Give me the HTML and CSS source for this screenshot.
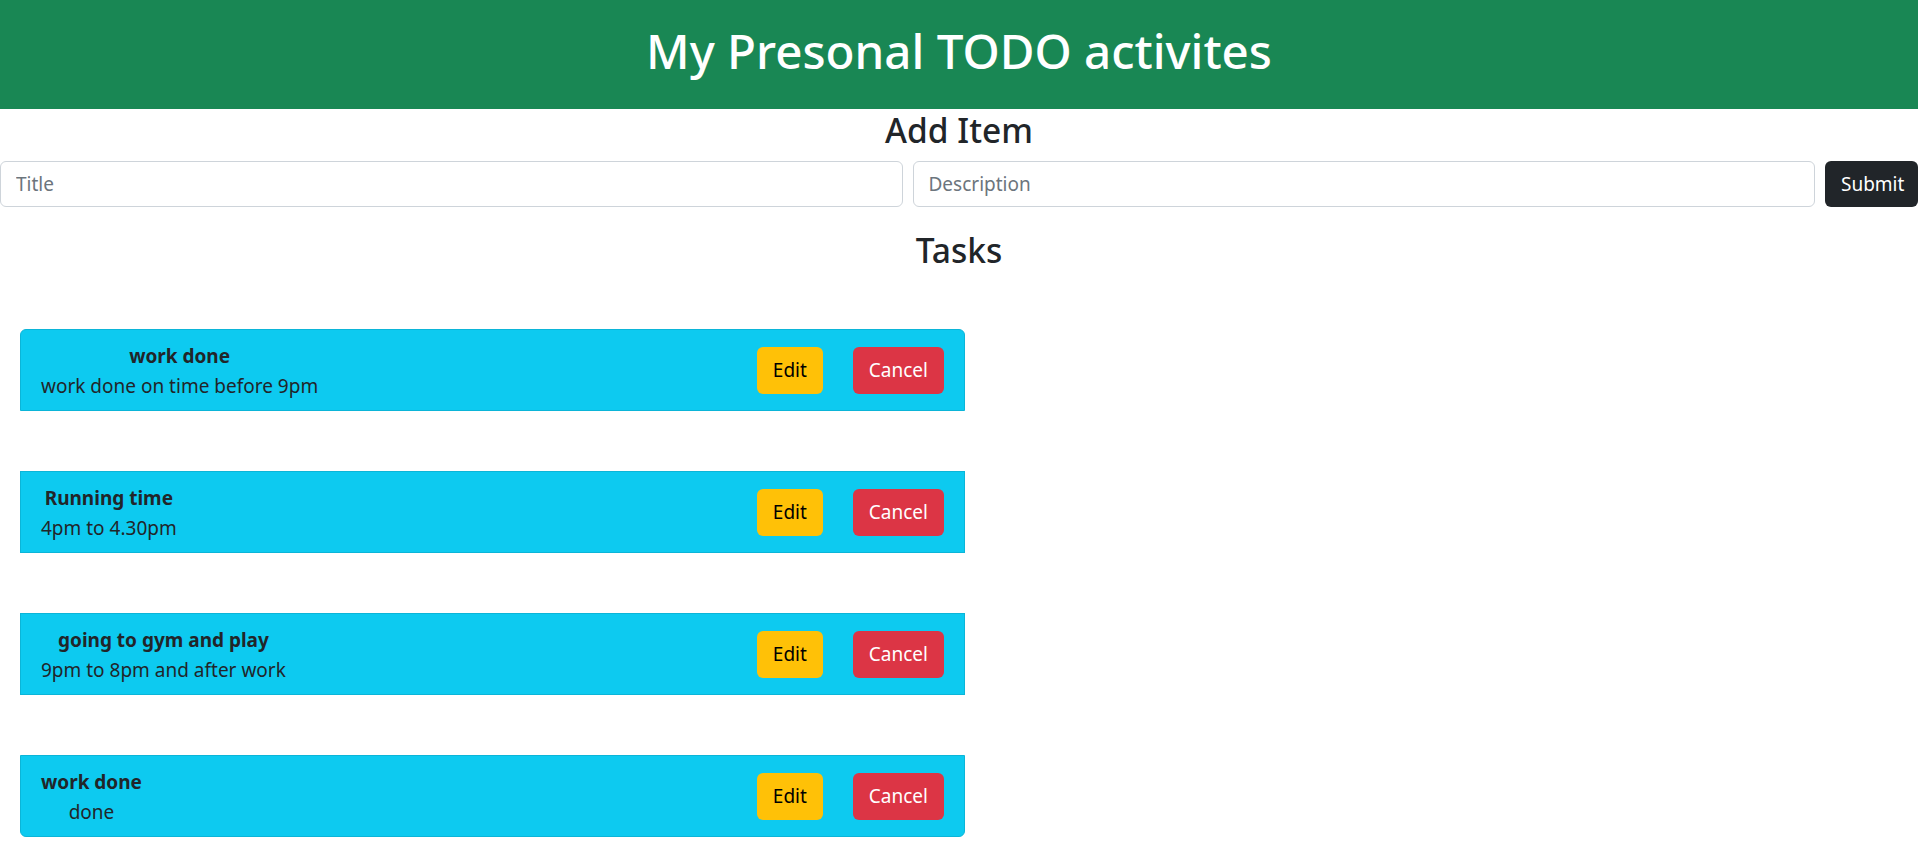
FILE: index.html
```html
<!DOCTYPE html>
<html lang="en">
<head>
<meta charset="utf-8">
<title>My Presonal TODO activites</title>
<link rel="stylesheet" href="styles.css">
</head>
<body>
<header class="topbar">
  <h1 class="topbar-title">My Presonal TODO activites</h1>
</header>
<main>
  <section class="add">
    <h3 class="section-title">Add Item</h3>
    <form class="add-form">
      <input class="field" type="text" placeholder="Title">
      <input class="field" type="text" placeholder="Description">
      <button class="btn btn-dark" type="button">Submit</button>
    </form>
  </section>
  <section class="tasks">
    <h3 class="section-title tasks-title">Tasks</h3>
    <ul class="task-list">
      <li class="task">
        <div class="task-text">
          <div class="task-name">work done</div>
          <div class="task-desc">work done on time before 9pm</div>
        </div>
        <div class="task-actions">
          <button class="btn btn-warning" type="button">Edit</button>
          <button class="btn btn-danger" type="button">Cancel</button>
        </div>
      </li>
      <li class="task">
        <div class="task-text">
          <div class="task-name">Running time</div>
          <div class="task-desc">4pm to 4.30pm</div>
        </div>
        <div class="task-actions">
          <button class="btn btn-warning" type="button">Edit</button>
          <button class="btn btn-danger" type="button">Cancel</button>
        </div>
      </li>
      <li class="task">
        <div class="task-text">
          <div class="task-name">going to gym and play</div>
          <div class="task-desc">9pm to 8pm and after work</div>
        </div>
        <div class="task-actions">
          <button class="btn btn-warning" type="button">Edit</button>
          <button class="btn btn-danger" type="button">Cancel</button>
        </div>
      </li>
      <li class="task">
        <div class="task-text">
          <div class="task-name">work done</div>
          <div class="task-desc">done</div>
        </div>
        <div class="task-actions">
          <button class="btn btn-warning" type="button">Edit</button>
          <button class="btn btn-danger" type="button">Cancel</button>
        </div>
      </li>
    </ul>
  </section>
</main>
</body>
</html>
```
FILE: styles.css
```css
* { box-sizing: border-box; }

html, body {
  margin: 0;
  padding: 0;
  background: #fff;
}

body {
  font-family: "Noto Sans", "Open Sans", sans-serif;
  font-size: 19px;
  line-height: 1.5;
  color: #212529;
  overflow: hidden;
}

.topbar {
  background: #198754;
  height: 109px;
  padding-top: 21px;
  text-align: center;
}

.topbar-title {
  margin: 0;
  color: #fff;
  font-size: 47.5px;
  font-weight: 500;
  line-height: 60px;
}

.section-title {
  margin: 0 0 10px;
  text-align: center;
  font-size: 33.5px;
  font-weight: 500;
  line-height: 42px;
}

.add-form {
  display: flex;
  gap: 10px;
  margin: 0;
}

.field {
  flex: 1 1 0;
  min-width: 0;
  height: 46px;
  padding: 0 15px;
  border: 1px solid #ced4da;
  border-radius: 6px;
  font-family: inherit;
  font-size: 19px;
  color: #212529;
  background: #fff;
}

.field::placeholder { color: #6c757d; }

.btn {
  border: 1px solid transparent;
  border-radius: 6px;
  padding: 0 15px;
  height: 47px;
  font-family: inherit;
  font-size: 19px;
  line-height: 1.5;
  cursor: pointer;
}

.btn-dark { background: #212529; color: #fff; width: 93px; flex: none; height: 46px; }
.btn-warning { background: #ffc107; color: #000; }
.btn-danger { background: #dc3545; color: #fff; }

.tasks-title {
  margin-top: 22px;
}

.task-list {
  list-style: none;
  margin: 58px 0 0 20px;
  padding: 0;
  width: 945px;
  display: flex;
  flex-direction: column;
  gap: 60px;
}

.task {
  display: flex;
  align-items: center;
  justify-content: space-between;
  padding: 9px 20px;
  background: #0dcaf0;
  border: 1px solid #0bb5d8;
}

.task:first-child { border-radius: 6px 6px 0 0; }
.task:last-child { border-radius: 0 0 6px 6px; }

.task-text {
  text-align: center;
  line-height: 30px;
  padding-top: 2px;
}

.task-name { font-weight: 700; }

.task-actions {
  display: flex;
  gap: 30px;
}
```
